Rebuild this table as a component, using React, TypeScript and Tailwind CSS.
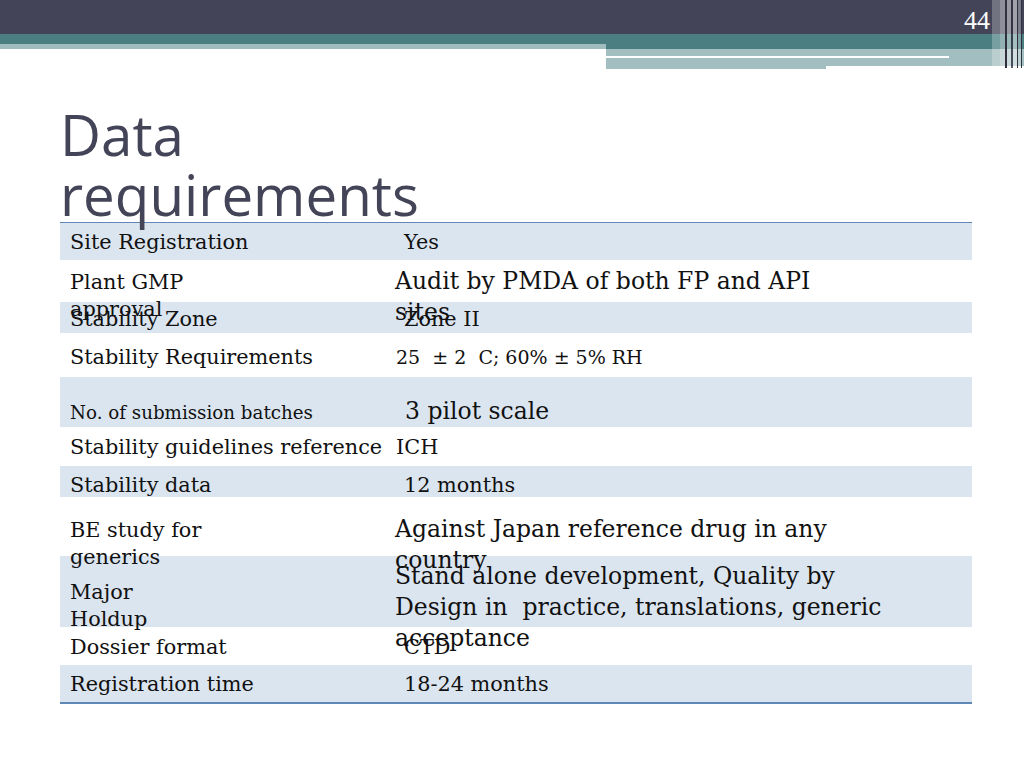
import React from "react";

type Cell = { lines: string[]; size: "n" | "s" | "b" | "m"; pt: string; pl: string };
type Row = { h: string; bg: boolean; c1: Cell; c2: Cell };

const rows: Row[] = [
  { h: "h-[37px]", bg: true, c1: { lines: ["Site Registration"], size: "n", pt: "pt-[6px]", pl: "pl-[10px]" }, c2: { lines: ["Yes"], size: "n", pt: "pt-[6px]", pl: "pl-[18px]" } },
  { h: "h-[42px]", bg: false, c1: { lines: ["Plant GMP", "approval"], size: "n", pt: "pt-[9px]", pl: "pl-[10px]" }, c2: { lines: ["Audit by PMDA of both FP and API", "sites"], size: "b", pt: "pt-[6px]", pl: "pl-[9px]" } },
  { h: "h-[31px]", bg: true, c1: { lines: ["Stability Zone"], size: "n", pt: "pt-[4px]", pl: "pl-[10px]" }, c2: { lines: ["Zone II"], size: "n", pt: "pt-[4px]", pl: "pl-[18px]" } },
  { h: "h-[44px]", bg: false, c1: { lines: ["Stability Requirements"], size: "n", pt: "pt-[11px]", pl: "pl-[10px]" }, c2: { lines: ["25  \u00b1 2  C; 60% \u00b1 5% RH"], size: "m", pt: "pt-[11px]", pl: "pl-[10px]" } },
  { h: "h-[50px]", bg: true, c1: { lines: ["No. of submission batches"], size: "s", pt: "pt-[24px]", pl: "pl-[10px]" }, c2: { lines: ["3 pilot scale"], size: "b", pt: "pt-[19px]", pl: "pl-[19px]" } },
  { h: "h-[39px]", bg: false, c1: { lines: ["Stability guidelines reference"], size: "n", pt: "pt-[7px]", pl: "pl-[10px]" }, c2: { lines: ["ICH"], size: "n", pt: "pt-[7px]", pl: "pl-[10px]" } },
  { h: "h-[31px]", bg: true, c1: { lines: ["Stability data"], size: "n", pt: "pt-[6px]", pl: "pl-[10px]" }, c2: { lines: ["12 months"], size: "n", pt: "pt-[6px]", pl: "pl-[18px]" } },
  { h: "h-[59px]", bg: false, c1: { lines: ["BE study for", "generics"], size: "n", pt: "pt-[20px]", pl: "pl-[10px]" }, c2: { lines: ["Against Japan reference drug in any", "country"], size: "b", pt: "pt-[17px]", pl: "pl-[9px]" } },
  { h: "h-[71px]", bg: true, c1: { lines: ["Major", "Holdup"], size: "n", pt: "pt-[23px]", pl: "pl-[10px]" }, c2: { lines: ["Stand alone development, Quality by", "Design in  practice, translations, generic", "acceptance"], size: "b", pt: "pt-[5px]", pl: "pl-[9px]" } },
  { h: "h-[38px]", bg: false, c1: { lines: ["Dossier format"], size: "n", pt: "pt-[7px]", pl: "pl-[10px]" }, c2: { lines: ["CTD"], size: "n", pt: "pt-[7px]", pl: "pl-[18px]" } },
  { h: "h-[37px]", bg: true, c1: { lines: ["Registration time"], size: "n", pt: "pt-[6px]", pl: "pl-[10px]" }, c2: { lines: ["18-24 months"], size: "n", pt: "pt-[6px]", pl: "pl-[18px]" } },
];

const sizeCls = {
  n: "text-[20.8px] leading-[27px]",
  m: "text-[19px] leading-[27px]",
  s: "text-[18.25px] leading-[24px]",
  b: "text-[23.5px] leading-[31px]",
};

function CellView({ c }: { c: Cell }) {
  return (
    <div className={`${c.pt} ${c.pl} ${sizeCls[c.size]} whitespace-pre text-[#111]`}>
      {c.lines.map((l, i) => (
        <div key={i}>{l}</div>
      ))}
    </div>
  );
}

export default function App() {
  return (
    <div className="w-[1024px] h-[768px] bg-white overflow-hidden" style={{ fontFamily: "'DejaVu Serif', serif" }}>
      {/* Header */}
      <div className="relative h-[70px]">
        <div className="h-[34px] bg-[#434457] flex justify-end pr-[34px]">
          <div className="pt-[8px] text-[26px] leading-[26px] text-white" style={{ fontFamily: "'Liberation Serif', serif" }}>44</div>
        </div>
        <div className="flex">
          <div className="w-[606px] flex flex-col">
            <div className="h-[10px] bg-[#4a7e80]" />
            <div className="h-[5px] bg-[#9fbcbe]" />
          </div>
          <div className="flex-1 flex flex-col">
            <div className="h-[15px] bg-[#4a7e80]" />
            <div className="h-[7px] bg-[#a3bec0]" />
            <div className="h-[2px] flex">
              <div className="w-[343px] bg-white" />
              <div className="flex-1 bg-[#a3bec0]" />
            </div>
            <div className="h-[11px] flex">
              <div className="w-[220px] bg-[#a3bec0]" />
              <div className="flex-1 flex flex-col">
                <div className="h-[8px] bg-[#a3bec0]" />
              </div>
            </div>
          </div>
        </div>
        {/* vertical stripes on right */}
        <div className="absolute top-0 left-[992px] h-[68px] flex">
          <div className="w-[8px] bg-white/25" />
          <div className="w-[5px] bg-white/40" />
          <div className="w-[2px] bg-[#2f3040]" />
          <div className="w-[4px] bg-white/45" />
          <div className="w-[2px] bg-[#2f3040]/80" />
          <div className="w-[4px] bg-white/50" />
          <div className="w-[1px] bg-[#2f3040]" />
          <div className="w-[3px] bg-white/30" />
          <div className="w-[1px] bg-[#2f3040]" />
        </div>
      </div>

      {/* Content */}
      <div className="ml-[60px] w-[912px] mt-[35px]">
        <div className="h-[117px]">
          <div className="text-[56.5px] leading-[60px] text-[#434457]" style={{ fontFamily: "'Open Sans', sans-serif" }}>
            <div>Data</div>
            <div>requirements</div>
          </div>
        </div>
        <div className="border-t border-b-2 border-t-[#5f88b8] border-b-[#5f88b8]">
          {rows.map((r, i) => (
            <div key={i} className={`${r.h} ${r.bg ? "bg-[#dbe5ef]" : "bg-white"} grid grid-cols-[326px_1fr]`}>
              <CellView c={r.c1} />
              <CellView c={r.c2} />
            </div>
          ))}
        </div>
      </div>
    </div>
  );
}
